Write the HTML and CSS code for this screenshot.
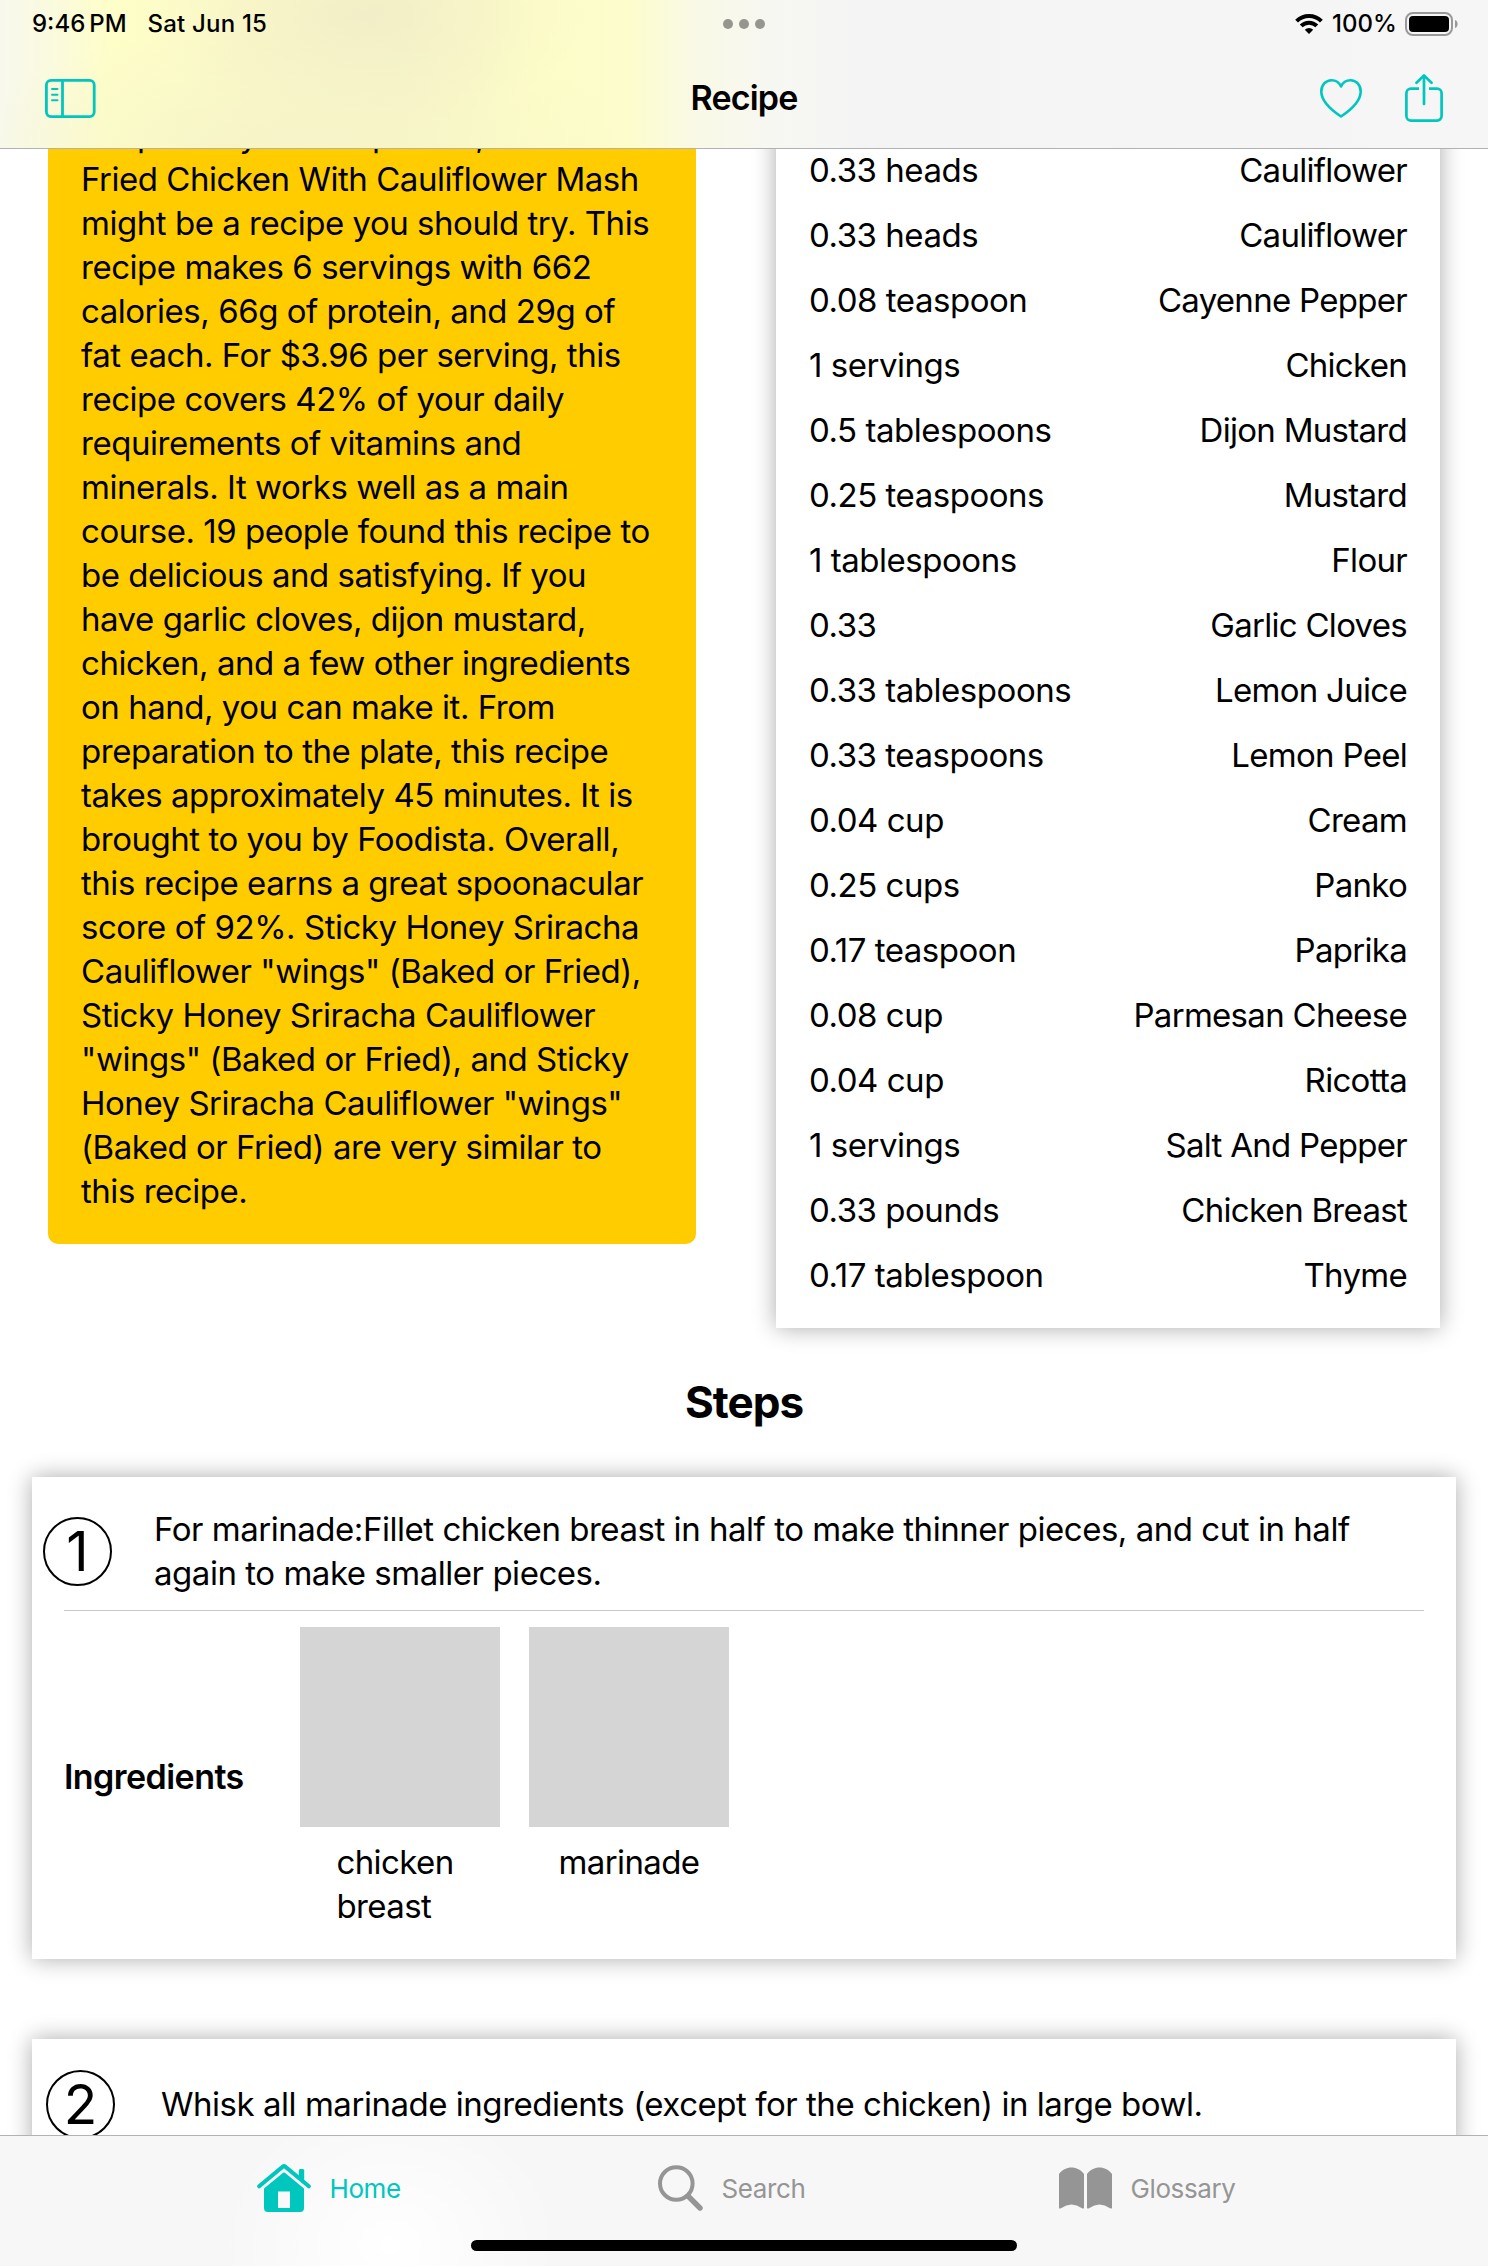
FILE: index.html
```html
<!DOCTYPE html>
<html lang="en">
<head>
<meta charset="utf-8">
<title>Recipe</title>
<link rel="stylesheet" href="styles.css">
</head>
<body>
<div class="screen">
  <header class="topbar">
    <div class="status">
      <div class="status-left"><span class="time">9:46<i class="thin"></i>PM</span><span class="date">Sat Jun 15</span></div>
      <div class="dots"><i></i><i></i><i></i></div>
      <div class="status-right">
        <svg class="wifi" width="28" height="20" viewBox="0 0 28 20"><g fill="none" stroke="#000" stroke-width="4"><path d="M1.6 7.2a17.6 17.6 0 0 1 24.8 0"/><path d="M6.2 11.9a11 11 0 0 1 15.6 0"/></g><path d="M14 20l-4.2-4.2a6 6 0 0 1 8.4 0z"/></svg>
        <span class="percent">100%</span>
        <svg class="battery" width="54" height="24" viewBox="0 0 54 24"><rect x="1" y="1" width="46" height="22" rx="7" fill="none" stroke="#999" stroke-width="2"/><rect x="4" y="4" width="40" height="16" rx="4"/><path d="M50 8c3.500 1 3.500 7 0 8z" fill="#999"/></svg>
      </div>
    </div>
    <nav class="navbar">
      <svg class="sidebar-icon" width="51" height="39" viewBox="0 0 51 39" fill="none" stroke="#00c7be"><rect x="1.400" y="1.400" width="47.800" height="36.200" rx="4.500" stroke-width="2.800"/><path d="M17.500 1v37" stroke-width="2.800"/><path d="M7 10h5.500M7 15.700h5.500M7 21.300h5.500" stroke-width="2" stroke-linecap="round"/></svg>
      <h1>Recipe</h1>
      <div class="actions">
        <svg width="42" height="39" viewBox="0 0 42 39"><path d="M21 37.500C12 31.500 1.300 22.500 1.300 12.500C1.300 6 5.800 1.300 11.500 1.300C16 1.300 19.300 3.800 21 7.500C22.700 3.800 26 1.300 30.500 1.300C36.200 1.300 40.700 6 40.700 12.500C40.700 22.500 30 31.500 21 37.500Z" fill="none" stroke="#00c7be" stroke-width="2.600" stroke-linejoin="round"/></svg>
        <svg width="38" height="48" viewBox="0 0 38 48"><g fill="none" stroke="#00c7be" stroke-width="2.700" stroke-linecap="round" stroke-linejoin="round"><path d="M14 14.700H6a4.600 4.600 0 0 0-4.600 4.600v22.700a4.600 4.600 0 0 0 4.600 4.600h26a4.600 4.600 0 0 0 4.600-4.600V19.300a4.600 4.600 0 0 0-4.600-4.600h-8" stroke-linecap="butt"/><path d="M19 30V2M11.500 8.800L19 1.400l7.500 7.400"/></g></svg>
      </div>
    </nav>
  </header>

  <main class="content">
    <section class="overview">
      <p class="summary">recipes to your recipe box,<br>Fried Chicken With Cauliflower Mash<br>might be a recipe you should try. This<br>recipe makes 6 servings with 662<br>calories, 66g of protein, and 29g of<br>fat each. For $3.96 per serving, this<br>recipe covers 42% of your daily<br>requirements of vitamins and<br>minerals. It works well as a main<br>course. 19 people found this recipe to<br>be delicious and satisfying. If you<br>have garlic cloves, dijon mustard,<br>chicken, and a few other ingredients<br>on hand, you can make it. From<br>preparation to the plate, this recipe<br>takes approximately 45 minutes. It is<br>brought to you by Foodista. Overall,<br>this recipe earns a great spoonacular<br>score of 92%. Sticky Honey Sriracha<br>Cauliflower "wings" (Baked or Fried),<br>Sticky Honey Sriracha Cauliflower<br>"wings" (Baked or Fried), and Sticky<br>Honey Sriracha Cauliflower "wings"<br>(Baked or Fried) are very similar to<br>this recipe.</p>
      <ul class="ingredients">
        <li><span>0.33 heads</span><span>Cauliflower</span></li>
        <li><span>0.33 heads</span><span>Cauliflower</span></li>
        <li><span>0.08 teaspoon</span><span>Cayenne Pepper</span></li>
        <li><span>1 servings</span><span>Chicken</span></li>
        <li><span>0.5 tablespoons</span><span>Dijon Mustard</span></li>
        <li><span>0.25 teaspoons</span><span>Mustard</span></li>
        <li><span>1 tablespoons</span><span>Flour</span></li>
        <li><span>0.33</span><span>Garlic Cloves</span></li>
        <li><span>0.33 tablespoons</span><span>Lemon Juice</span></li>
        <li><span>0.33 teaspoons</span><span>Lemon Peel</span></li>
        <li><span>0.04 cup</span><span>Cream</span></li>
        <li><span>0.25 cups</span><span>Panko</span></li>
        <li><span>0.17 teaspoon</span><span>Paprika</span></li>
        <li><span>0.08 cup</span><span>Parmesan Cheese</span></li>
        <li><span>0.04 cup</span><span>Ricotta</span></li>
        <li><span>1 servings</span><span>Salt And Pepper</span></li>
        <li><span>0.33 pounds</span><span>Chicken Breast</span></li>
        <li><span>0.17 tablespoon</span><span>Thyme</span></li>
      </ul>
    </section>

    <h2>Steps</h2>

    <article class="step">
      <div class="step-head">
        <span class="number">1</span>
        <p>For marinade:Fillet chicken breast in half to make thinner pieces, and cut in half<br>again to make smaller pieces.</p>
      </div>
      <div class="step-items">
        <h3>Ingredients</h3>
        <figure><div class="thumb"></div><figcaption>chicken<br>breast</figcaption></figure>
        <figure><div class="thumb"></div><figcaption>marinade</figcaption></figure>
      </div>
    </article>

    <article class="step step-single">
      <div class="step-head">
        <span class="number">2</span>
        <p>Whisk all marinade ingredients (except for the chicken) in large bowl.</p>
      </div>
    </article>
  </main>

  <footer class="tabbar">
    <nav class="tabs">
      <a class="tab active"><svg width="54" height="48" viewBox="0 0 54 48" fill="currentColor"><path d="M2.200 22.300L25.800 2.600a2 2 0 0 1 2.400 0L51.800 22.300" fill="none" stroke="currentColor" stroke-width="4" stroke-linecap="round" stroke-linejoin="round"/><path d="M41.800 6.500a1.500 1.500 0 0 1 1.500-1.500h2.400a1.500 1.500 0 0 1 1.500 1.500V18l-5.400-4.500z"/><path fill-rule="evenodd" d="M25.800 8.900a2 2 0 0 1 2.400 0L47 24.500V44a4 4 0 0 1-4 4H11a4 4 0 0 1-4-4V24.500zM21 27.500v16.500h12V27.500z"/></svg><span>Home</span></a>
      <a class="tab"><svg width="45" height="46" viewBox="0 0 45 46" fill="none" stroke="currentColor"><circle cx="18.300" cy="18.500" r="16.300" stroke-width="4"/><path d="M30.500 31.500l11.500 11.500" stroke-width="5.400" stroke-linecap="round"/></svg><span>Search</span></a>
      <a class="tab"><svg width="53" height="42" viewBox="0 0 53 42" fill="currentColor"><path d="M0 7C6-1.800 19-1.800 25 7v34q-.6 1-2 .2Q12.500 34 2 41.200Q.6 42 0 41z"/><path d="M28 7C34-1.800 47-1.800 53 7v34q-.6 1-2 .2Q40.500 34 30 41.200Q28.600 42 28 41z"/></svg><span>Glossary</span></a>
    </nav>
    <div class="home-indicator"></div>
  </footer>
</div>
</body>
</html>
```
FILE: styles.css
```css
* { box-sizing: border-box; margin: 0; padding: 0; }

body {
  font-family: Inter, "Liberation Sans", sans-serif;
  font-size: 33px;
  line-height: 44px;
  letter-spacing: -.47px;
  color: #000;
  background: #fff;
}

.screen {
  display: flex;
  flex-direction: column;
  height: 2266px;
  overflow: hidden;
}

/* Top bar */
.topbar {
  flex: none;
  height: 149px;
  border-bottom: 1px solid #b2b2b2;
  background:
    radial-gradient(ellipse 220px 110px at 365px 15px, rgba(240, 236, 200, .8), rgba(240, 236, 200, 0)),
    radial-gradient(ellipse 330px 130px at 300px 149px, rgba(245, 243, 200, .9), rgba(245, 243, 200, 0)),
    linear-gradient(to right, #f8f8ee 0, #fafadf 50px, #fefec9 110px, #fcfbc8 250px, #f9f8c8 400px, #fdfdc8 540px, #fcfccd 630px, #f9f9e6 695px, #f7f7f2 770px, #f4f4f4 860px, #f6f6f6 100%);
}

.status {
  display: grid;
  grid-template-columns: 1fr auto 1fr;
  align-items: center;
  height: 48px;
  padding: 0 32px;
  font-size: 24px;
  font-weight: 500;
  line-height: 30px;
  letter-spacing: 0;
}
.status-left { display: flex; gap: 21px; }
.date { letter-spacing: .2px; }
.time .thin { display: inline-block; width: 4px; }
.dots { display: flex; gap: 6px; }
.dots i { width: 10px; height: 10px; border-radius: 50%; background: #96968f; }
.status-right { display: flex; align-items: center; justify-content: flex-end; }
.percent { width: 64px; margin: 0 9px; }
.battery { margin-right: -3px; }

.navbar {
  display: grid;
  grid-template-columns: 1fr auto 1fr;
  align-items: center;
  height: 100px;
  padding: 0 45px;
}
.navbar h1 { font-size: 34px; font-weight: 600; letter-spacing: -.8px; }
.actions { display: flex; align-items: center; justify-content: flex-end; gap: 43px; }

/* Scrolled page content */
.content { flex: 1; min-height: 0; overflow: hidden; }

.overview {
  display: flex;
  align-items: flex-start;
  justify-content: space-between;
  height: 1179px;
  padding: 0 48px;
}
.summary {
  width: 648px;
  height: 1131px;
  margin-top: -36px;
  padding: 0 33px;
  border-radius: 0 0 10px 10px;
  background: #fc0;
  white-space: nowrap;
}
.ingredients {
  width: 664px;
  height: 1244px;
  margin-top: -65px;
  padding: 64px 33px 0;
  list-style: none;
  box-shadow: 0 0 22px rgba(0, 0, 0, .33);
}
.ingredients li {
  display: flex;
  justify-content: space-between;
  height: 65px;
}
.ingredients span:last-child { letter-spacing: -.71px; }

h2 {
  margin: 48px 0;
  font-size: 44px;
  line-height: 53px;
  letter-spacing: -1px;
  text-align: center;
}

.step {
  height: 482px;
  margin: 0 32px 80px;
  box-shadow: 0 0 22px rgba(0, 0, 0, .33);
}
.step-head {
  display: flex;
  height: 133px;
  padding: 30px 0 0 11px;
}
.number {
  width: 69px;
  height: 69px;
  margin: 10px 42px 0 0;
  border: 2px solid #000;
  border-radius: 50%;
  font-size: 55px;
  line-height: 65px;
  letter-spacing: 0;
  text-align: center;
}
.step-items {
  display: flex;
  margin: 0 32px;
  padding-top: 16px;
  border-top: 1px solid #c6c6c8;
}
.step-items h3 {
  width: 236px;
  margin-top: 128px;
  font-size: 34px;
  font-weight: 600;
  letter-spacing: -.55px;
}
.step-items figure { width: 200px; margin-right: 29px; }
.thumb { height: 200px; margin-bottom: 13px; background: #d5d5d5; }
figcaption { width: fit-content; margin: 0 auto; padding-right: 10px; letter-spacing: -.6px; }
figure:last-child figcaption { padding-right: 0; }

.step-single .step-head { padding: 21px 0 0 14px; }
.step-single .number { margin-right: 46px; }
.step-single p { margin-top: 22px; }

/* Bottom tab bar */
.tabbar {
  flex: none;
  height: 131px;
  border-top: 1px solid #b2b2b2;
  background: radial-gradient(ellipse 170px 150px at 390px 110px, #fff, rgba(255, 255, 255, 0)), #f7f7f7;
}
.tabs {
  display: flex;
  height: 104px;
  padding-left: 257px;
  font-size: 26px;
  letter-spacing: -.4px;
}
.tab { display: flex; align-items: center; gap: 18.500px; width: 401px; color: #959595; }
.tab span { padding-top: 2px; }
.tab.active { color: #00c7be; }
.home-indicator {
  width: 546px;
  height: 11px;
  margin: 0 auto;
  border-radius: 6px;
  background: #000;
}
```
